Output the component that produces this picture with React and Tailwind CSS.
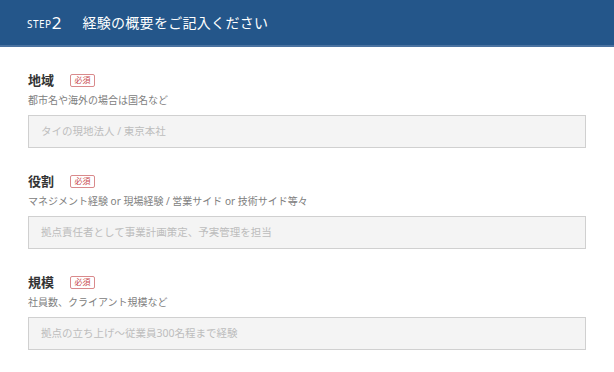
import React from 'react';

const fields = [
  { label: '地域', hint: '都市名や海外の場合は国名など', placeholder: 'タイの現地法人 / 東京本社' },
  { label: '役割', hint: 'マネジメント経験 or 現場経験 / 営業サイド or 技術サイド等々', placeholder: '拠点責任者として事業計画策定、予実管理を担当' },
  { label: '規模', hint: '社員数、クライアント規模など', placeholder: '拠点の立ち上げ〜従業員300名程まで経験' },
];

const App = () => {
  return (
    <div className="w-[614px] h-[372px] bg-white overflow-hidden" style={{ fontFamily: '"Noto Sans", "Noto Sans CJK JP", sans-serif' }}>
      <div className="h-[47px] bg-[#24568a] border-b-2 border-[#4a72a0] flex items-center pl-[27px] text-white">
        <span className="text-[10px] tracking-[0.5px] mt-[3px]">STEP</span>
        <span className="text-[17px] leading-none">2</span>
        <span className="ml-[21px] text-[14px] tracking-[0.3px]">経験の概要をご記入ください</span>
      </div>
      <div className="px-[28px] pt-[25px] flex flex-col gap-[25px]">
        {fields.map((f) => (
          <div key={f.label} className="flex flex-col">
            <div className="flex items-center h-[16px]">
              <span className="text-[13px] font-bold text-[#333] leading-none">{f.label}</span>
              <span className="ml-[16px] h-[13px] w-[25px] flex items-center justify-center border border-[#d98a8c] rounded-[2px] text-[8px] text-[#c9494d] leading-none">必須</span>
            </div>
            <div className="mt-[6px] h-[13px] text-[10px] text-[#808080] leading-[13px]">{f.hint}</div>
            <div className="mt-[8px] h-[33px] w-[558px] bg-[#f4f4f4] border border-[#d0d0d0] flex items-center px-[12px] text-[10.5px] text-[#bdbdbd]">
              {f.placeholder}
            </div>
          </div>
        ))}
      </div>
    </div>
  );
};

export default App;
